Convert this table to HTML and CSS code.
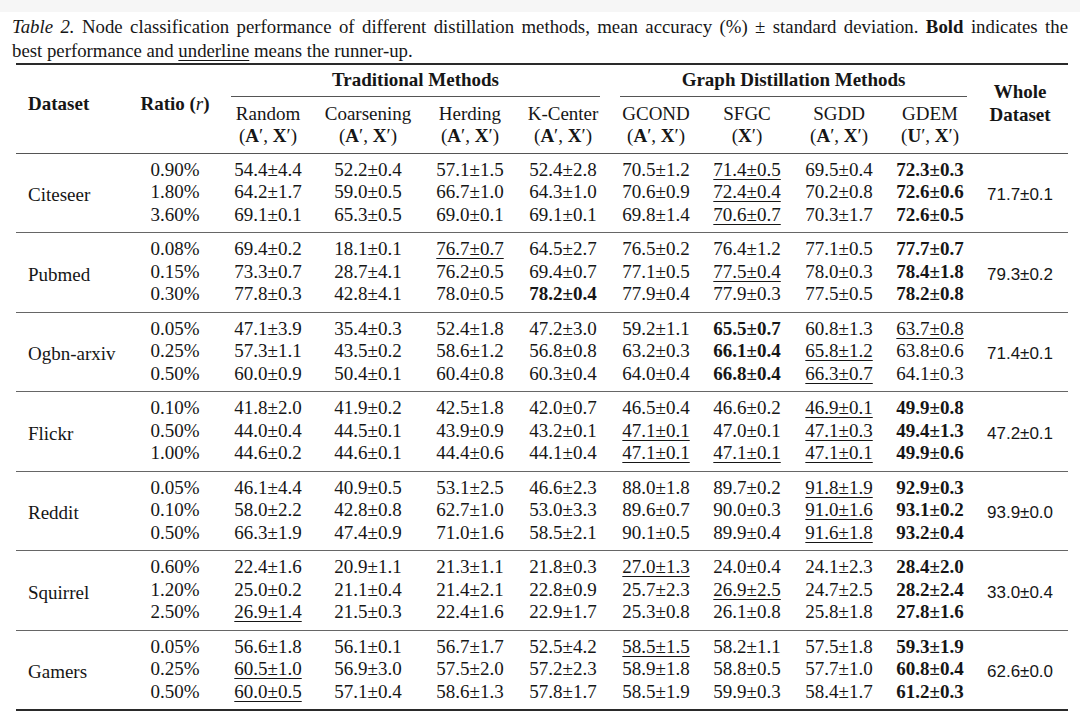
FILE: index.html
```html
<!DOCTYPE html>
<html>
<head>
<meta charset="utf-8">
<link rel="stylesheet" href="styles.css">
</head>
<body>
<div class="topband"></div>
<div class="caption">
  <div class="cap-line1"><i>Table 2.</i> Node classification performance of different distillation methods, mean accuracy (%) ± standard deviation. <b>Bold</b> indicates the</div>
  <div class="cap-line2">best performance and <u>underline</u> means the runner-up.</div>
</div>
<table class="results">
  <colgroup>
    <col class="c-ds"><col class="c-ratio"><col class="c-random"><col class="c-coars"><col class="c-herd"><col class="c-kc"><col class="c-gcond"><col class="c-sfgc"><col class="c-sgdd"><col class="c-gdem"><col class="c-whole">
  </colgroup>
  <thead>
    <tr class="h1">
      <th rowspan="2" class="side ds">Dataset</th>
      <th rowspan="2" class="side">Ratio (<i class="m">r</i>)</th>
      <th colspan="4" class="group"><div class="cmid trad">Traditional Methods</div></th>
      <th colspan="4" class="group"><div class="cmid graph">Graph Distillation Methods</div></th>
      <th rowspan="2" class="side whole-h">Whole<br>Dataset</th>
    </tr>
    <tr class="h2">
      <th class="meth">Random<br>(<b>A</b>′, <b>X</b>′)</th>
      <th class="meth">Coarsening<br>(<b>A</b>′, <b>X</b>′)</th>
      <th class="meth">Herding<br>(<b>A</b>′, <b>X</b>′)</th>
      <th class="meth">K-Center<br>(<b>A</b>′, <b>X</b>′)</th>
      <th class="meth">GCOND<br>(<b>A</b>′, <b>X</b>′)</th>
      <th class="meth">SFGC<br>(<b>X</b>′)</th>
      <th class="meth">SGDD<br>(<b>A</b>′, <b>X</b>′)</th>
      <th class="meth">GDEM<br>(<b>U</b>′, <b>X</b>′)</th>
    </tr>
  </thead>
  <tbody>
    <tr class="first"><td rowspan="3" class="name">Citeseer</td><td>0.90%</td><td>54.4±4.4</td><td>52.2±0.4</td><td>57.1±1.5</td><td>52.4±2.8</td><td>70.5±1.2</td><td class="u">71.4±0.5</td><td>69.5±0.4</td><td class="b">72.3±0.3</td><td rowspan="3" class="whole">71.7±0.1</td></tr>
    <tr><td>1.80%</td><td>64.2±1.7</td><td>59.0±0.5</td><td>66.7±1.0</td><td>64.3±1.0</td><td>70.6±0.9</td><td class="u">72.4±0.4</td><td>70.2±0.8</td><td class="b">72.6±0.6</td></tr>
    <tr class="last"><td>3.60%</td><td>69.1±0.1</td><td>65.3±0.5</td><td>69.0±0.1</td><td>69.1±0.1</td><td>69.8±1.4</td><td class="u">70.6±0.7</td><td>70.3±1.7</td><td class="b">72.6±0.5</td></tr>
  </tbody>
  <tbody>
    <tr class="first"><td rowspan="3" class="name">Pubmed</td><td>0.08%</td><td>69.4±0.2</td><td>18.1±0.1</td><td class="u">76.7±0.7</td><td>64.5±2.7</td><td>76.5±0.2</td><td>76.4±1.2</td><td>77.1±0.5</td><td class="b">77.7±0.7</td><td rowspan="3" class="whole">79.3±0.2</td></tr>
    <tr><td>0.15%</td><td>73.3±0.7</td><td>28.7±4.1</td><td>76.2±0.5</td><td>69.4±0.7</td><td>77.1±0.5</td><td class="u">77.5±0.4</td><td>78.0±0.3</td><td class="b">78.4±1.8</td></tr>
    <tr class="last"><td>0.30%</td><td>77.8±0.3</td><td>42.8±4.1</td><td>78.0±0.5</td><td class="b">78.2±0.4</td><td>77.9±0.4</td><td>77.9±0.3</td><td>77.5±0.5</td><td class="b">78.2±0.8</td></tr>
  </tbody>
  <tbody>
    <tr class="first"><td rowspan="3" class="name">Ogbn-arxiv</td><td>0.05%</td><td>47.1±3.9</td><td>35.4±0.3</td><td>52.4±1.8</td><td>47.2±3.0</td><td>59.2±1.1</td><td class="b">65.5±0.7</td><td>60.8±1.3</td><td class="u">63.7±0.8</td><td rowspan="3" class="whole">71.4±0.1</td></tr>
    <tr><td>0.25%</td><td>57.3±1.1</td><td>43.5±0.2</td><td>58.6±1.2</td><td>56.8±0.8</td><td>63.2±0.3</td><td class="b">66.1±0.4</td><td class="u">65.8±1.2</td><td>63.8±0.6</td></tr>
    <tr class="last"><td>0.50%</td><td>60.0±0.9</td><td>50.4±0.1</td><td>60.4±0.8</td><td>60.3±0.4</td><td>64.0±0.4</td><td class="b">66.8±0.4</td><td class="u">66.3±0.7</td><td>64.1±0.3</td></tr>
  </tbody>
  <tbody>
    <tr class="first"><td rowspan="3" class="name">Flickr</td><td>0.10%</td><td>41.8±2.0</td><td>41.9±0.2</td><td>42.5±1.8</td><td>42.0±0.7</td><td>46.5±0.4</td><td>46.6±0.2</td><td class="u">46.9±0.1</td><td class="b">49.9±0.8</td><td rowspan="3" class="whole">47.2±0.1</td></tr>
    <tr><td>0.50%</td><td>44.0±0.4</td><td>44.5±0.1</td><td>43.9±0.9</td><td>43.2±0.1</td><td class="u">47.1±0.1</td><td>47.0±0.1</td><td class="u">47.1±0.3</td><td class="b">49.4±1.3</td></tr>
    <tr class="last"><td>1.00%</td><td>44.6±0.2</td><td>44.6±0.1</td><td>44.4±0.6</td><td>44.1±0.4</td><td class="u">47.1±0.1</td><td class="u">47.1±0.1</td><td class="u">47.1±0.1</td><td class="b">49.9±0.6</td></tr>
  </tbody>
  <tbody>
    <tr class="first"><td rowspan="3" class="name">Reddit</td><td>0.05%</td><td>46.1±4.4</td><td>40.9±0.5</td><td>53.1±2.5</td><td>46.6±2.3</td><td>88.0±1.8</td><td>89.7±0.2</td><td class="u">91.8±1.9</td><td class="b">92.9±0.3</td><td rowspan="3" class="whole">93.9±0.0</td></tr>
    <tr><td>0.10%</td><td>58.0±2.2</td><td>42.8±0.8</td><td>62.7±1.0</td><td>53.0±3.3</td><td>89.6±0.7</td><td>90.0±0.3</td><td class="u">91.0±1.6</td><td class="b">93.1±0.2</td></tr>
    <tr class="last"><td>0.50%</td><td>66.3±1.9</td><td>47.4±0.9</td><td>71.0±1.6</td><td>58.5±2.1</td><td>90.1±0.5</td><td>89.9±0.4</td><td class="u">91.6±1.8</td><td class="b">93.2±0.4</td></tr>
  </tbody>
  <tbody>
    <tr class="first"><td rowspan="3" class="name">Squirrel</td><td>0.60%</td><td>22.4±1.6</td><td>20.9±1.1</td><td>21.3±1.1</td><td>21.8±0.3</td><td class="u">27.0±1.3</td><td>24.0±0.4</td><td>24.1±2.3</td><td class="b">28.4±2.0</td><td rowspan="3" class="whole">33.0±0.4</td></tr>
    <tr><td>1.20%</td><td>25.0±0.2</td><td>21.1±0.4</td><td>21.4±2.1</td><td>22.8±0.9</td><td>25.7±2.3</td><td class="u">26.9±2.5</td><td>24.7±2.5</td><td class="b">28.2±2.4</td></tr>
    <tr class="last"><td>2.50%</td><td class="u">26.9±1.4</td><td>21.5±0.3</td><td>22.4±1.6</td><td>22.9±1.7</td><td>25.3±0.8</td><td>26.1±0.8</td><td>25.8±1.8</td><td class="b">27.8±1.6</td></tr>
  </tbody>
  <tbody class="final">
    <tr class="first"><td rowspan="3" class="name">Gamers</td><td>0.05%</td><td>56.6±1.8</td><td>56.1±0.1</td><td>56.7±1.7</td><td>52.5±4.2</td><td class="u">58.5±1.5</td><td>58.2±1.1</td><td>57.5±1.8</td><td class="b">59.3±1.9</td><td rowspan="3" class="whole">62.6±0.0</td></tr>
    <tr><td>0.25%</td><td class="u">60.5±1.0</td><td>56.9±3.0</td><td>57.5±2.0</td><td>57.2±2.3</td><td>58.9±1.8</td><td>58.8±0.5</td><td>57.7±1.0</td><td class="b">60.8±0.4</td></tr>
    <tr class="last"><td>0.50%</td><td class="u">60.0±0.5</td><td>57.1±0.4</td><td>58.6±1.3</td><td>57.8±1.7</td><td>58.5±1.9</td><td>59.9±0.3</td><td>58.4±1.7</td><td class="b">61.2±0.3</td></tr>
  </tbody>
</table>
</body>
</html>
```

FILE: styles.css
```css
html, body {
  margin: 0;
  padding: 0;
  background: #ffffff;
}

body {
  width: 1080px;
  height: 722px;
  overflow: hidden;
  font-family: "Liberation Serif", "Times New Roman", serif;
  color: #161616;
}

.topband {
  height: 12px;
  background: #f6f6f6;
}

.caption {
  padding: 3px 12px 0 12px;
  width: 1056px;
  font-size: 18.8px;
  line-height: 23.5px;
}

.cap-line1 {
  text-align: justify;
  text-align-last: justify;
  white-space: nowrap;
}

.cap-line2 u {
  text-decoration-thickness: 1px;
  text-underline-offset: 3px;
}

.results {
  margin: 1px 0 0 16px;
  width: 1052px;
  table-layout: fixed;
  border-collapse: collapse;
  font-size: 19px;
  line-height: 22.5px;
  border-top: 2px solid #2a2a2a;
}

.c-ds { width: 112px; }
.c-ratio { width: 94px; }
.c-random { width: 92px; }
.c-coars { width: 108px; }
.c-herd { width: 96px; }
.c-kc { width: 90px; }
.c-gcond { width: 96px; }
.c-sfgc { width: 86px; }
.c-sgdd { width: 98px; }
.c-gdem { width: 84px; }
.c-whole { width: 96px; }

.results th,
.results td {
  padding: 0;
  text-align: center;
  white-space: nowrap;
}

.results th {
  font-weight: bold;
}

.side {
  vertical-align: middle;
  padding-bottom: 10px !important;
}

.side.ds {
  text-align: left !important;
  padding-left: 12px !important;
}

.m {
  font-weight: normal;
}

.group {
  padding-top: 4px !important;
  height: 26px;
}

.cmid {
  border-bottom: 1px solid #555;
  padding-bottom: 4px;
}

.cmid.trad {
  margin: 0 8px 0 9px;
}

.cmid.graph {
  margin: 0 5px 0 12px;
}

.meth {
  font-weight: normal !important;
  padding: 6px 0 5px 0 !important;
}

.meth b {
  font-weight: bold;
}

.results thead {
  border-bottom: 1.5px solid #555;
}

.results tbody {
  border-top: 1.5px solid #666;
}

.results tbody.final {
  border-bottom: 2px solid #2a2a2a;
}

.results tr.first td {
  padding-top: 5px;
}

.results tr.last td {
  padding-bottom: 6px;
}

.results td.name {
  text-align: left;
  padding: 8px 0 0 12px;
  vertical-align: middle;
}

.results td.whole {
  font-family: "Liberation Sans", Arial, sans-serif;
  font-size: 17px;
  padding: 8px 0 0 0;
  vertical-align: middle;
}

.results td.b {
  font-weight: bold;
}

.results td.u {
  text-decoration: underline;
  text-decoration-thickness: 1px;
  text-underline-offset: 3px;
}
```
